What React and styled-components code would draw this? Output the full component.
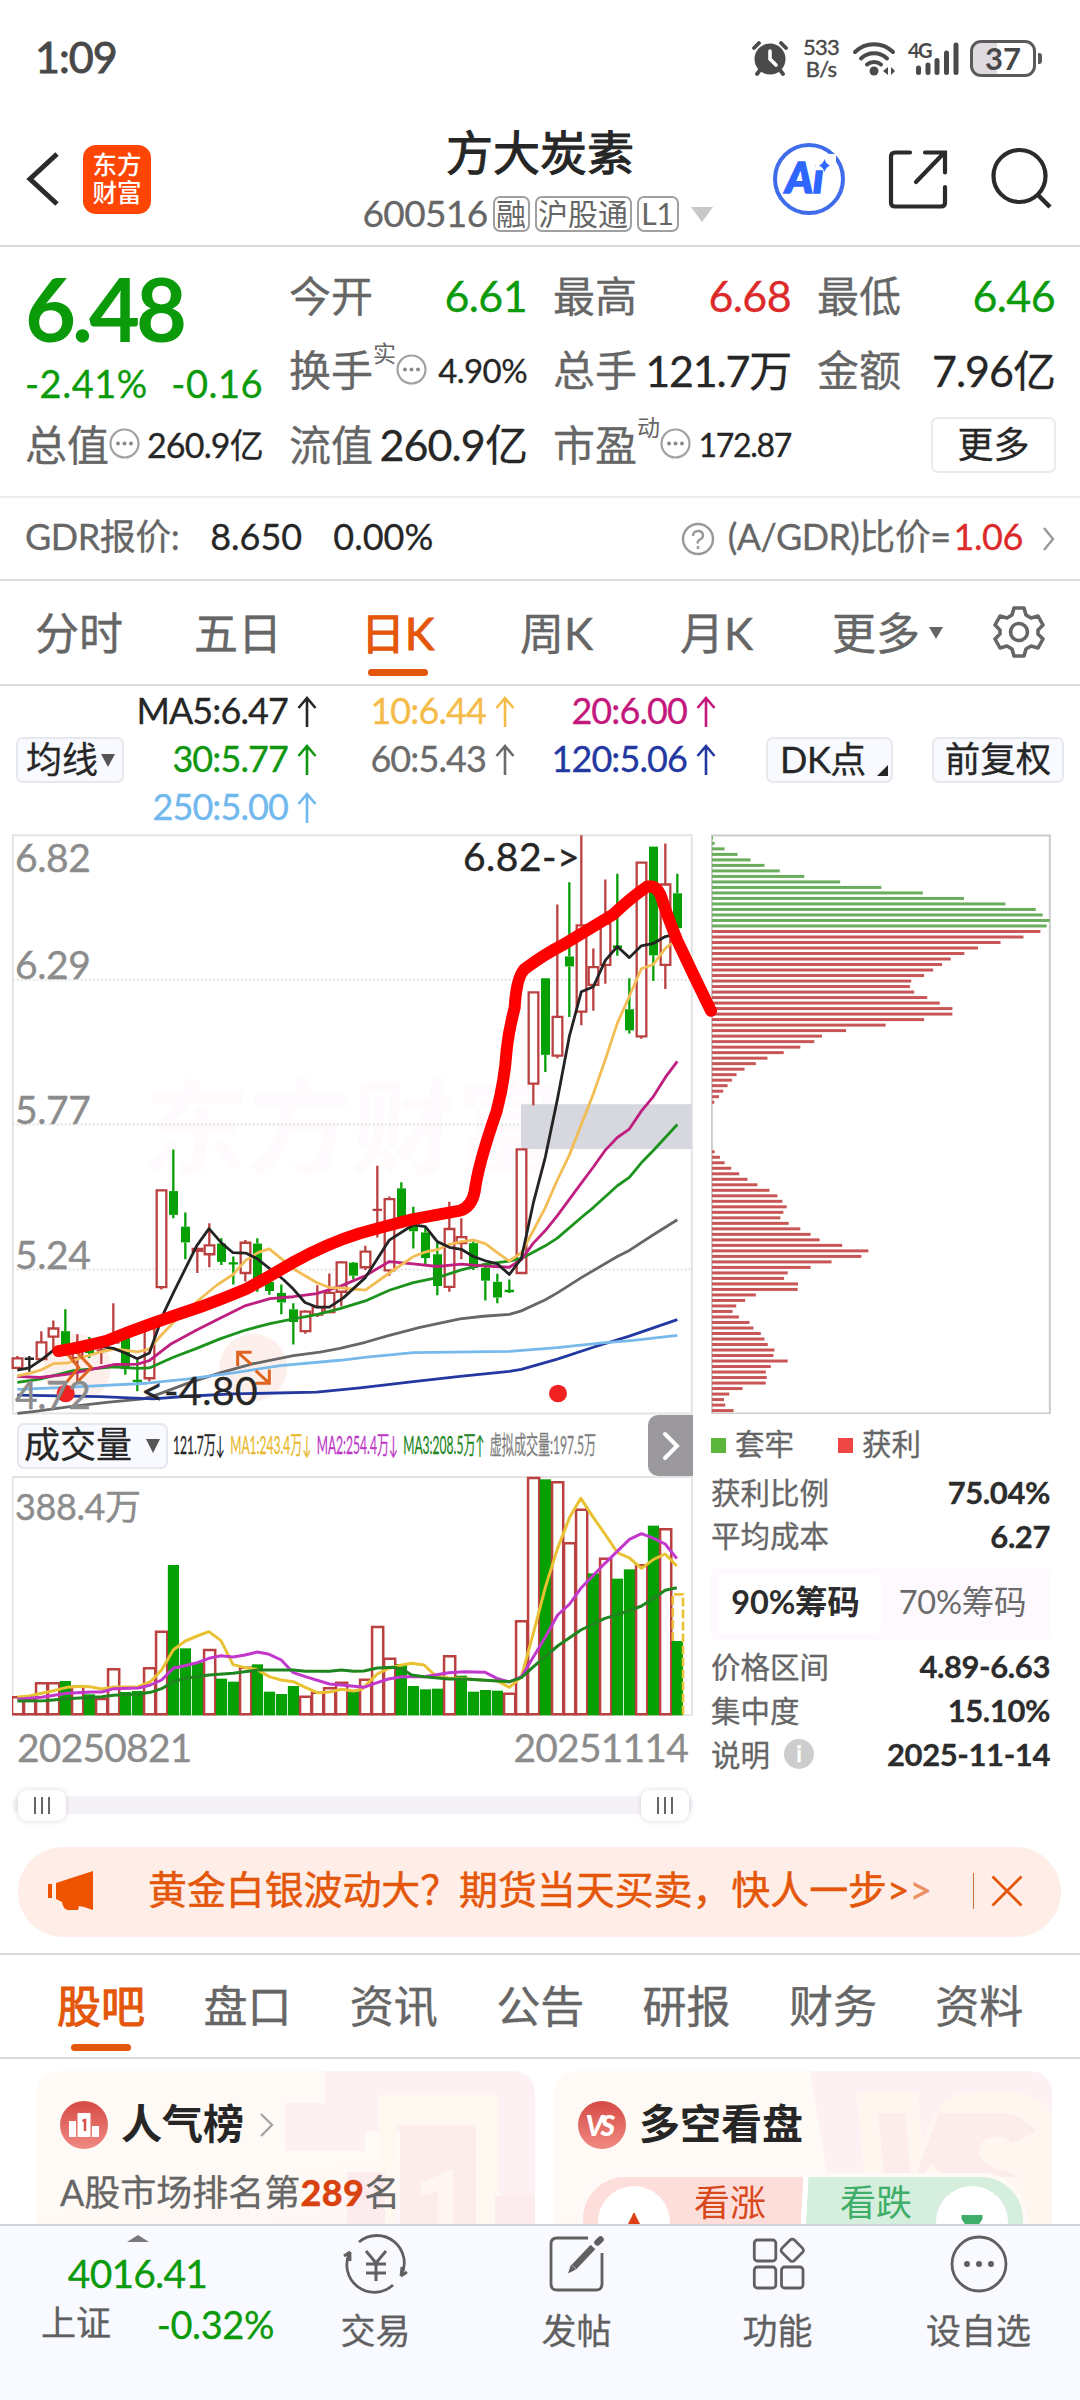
import React from 'react';
import styled, { createGlobalStyle } from 'styled-components';

const GREEN = '#0a9a0a';
const RED = '#dc2a2a';
const ORANGE = '#e4560a';
const GREY = '#666';

const GlobalStyle = createGlobalStyle`
  * { box-sizing: border-box; }
  body {
    margin: 0;
    background: #fff;
    color: #262626;
    font-family: "Lato", "Noto Sans CJK SC", sans-serif;
    line-height: 1;
  }
  svg { display: block; flex: none; }
`;

const Page = styled.div`
  width: 1080px;
  height: 2400px;
  overflow: hidden;
  background: #fff;
  display: flex;
  flex-direction: column;
`;

// every piece of copy goes through this one
const T = styled.span`
  flex: none;
  white-space: nowrap;
  font-size: ${p => p.$s || 36}px;
  color: ${p => p.$c || 'inherit'};
  font-weight: ${p => p.$b || 400};
  letter-spacing: ${p => p.$ls || 0}px;
  margin: 0 0 ${p => (p.$up === undefined ? 3 : p.$up)}px ${p => p.$ml || 0}px;
  -webkit-text-stroke: ${p => p.$stroke || 0.3}px currentColor;
`;

/* ---------- status bar ---------- */

const StatusBar = styled.div`
  height: 116px;
  flex: none;
  display: flex;
  align-items: center;
  padding: 0 38px 0 35px;
  color: #484848;
`;

const StatusIcons = styled.div`
  margin-left: auto;
  display: flex;
  align-items: center;
`;

const Speed = styled.div`
  width: 40px;
  margin: 0 11px 0 13px;
  font-size: 22px;
  line-height: 22px;
  text-align: center;
  letter-spacing: -0.8px;
  -webkit-text-stroke: 0.4px currentColor;
`;

const Battery = styled.div`
  width: 66px;
  height: 37px;
  margin-left: 11px;
  border: 3px solid #5a5a5a;
  border-radius: 11px;
  display: flex;
  align-items: center;
  justify-content: center;
  background: linear-gradient(90deg, #dedae0 40%, #fff 40%);
  font-size: 31px;
  font-weight: 700;
`;

const BatteryTip = styled.div`
  width: 4px;
  height: 11px;
  margin-left: 2px;
  border-radius: 0 3px 3px 0;
  background: #5a5a5a;
`;

const Status = () => (
  <StatusBar>
    <T $s={43} $stroke={0.9} $ls={-1}>1:09</T>
    <StatusIcons>
      <svg width="36" height="36" viewBox="0 0 36 36">
        <circle cx="18" cy="19" r="15.5" fill="#4a4a4a" />
        <path d="M2 8L7 3M34 8L29 3M8 30l-3 4M28 30l3 4" stroke="#4a4a4a" strokeWidth="3.8" strokeLinecap="round" />
        <path d="M18 11v8l6 6" stroke="#fff" strokeWidth="3.6" fill="none" strokeLinecap="round" />
      </svg>
      <Speed>533<br />B/s</Speed>
      <svg width="45" height="36" viewBox="0 0 45 36">
        <g fill="none" stroke="#4a4a4a" strokeWidth="4" strokeLinecap="round">
          <path d="M3 12a27 27 0 0 1 38 0" />
          <path d="M9 18.500a19 19 0 0 1 26 0" />
          <path d="M15 24.500a11 11 0 0 1 14 0" />
        </g>
        <circle cx="22" cy="31" r="4.500" fill="#4a4a4a" />
        <path d="M31 31l5-4v8zM43 31l-4-4v8z" fill="#4a4a4a" />
      </svg>
      <svg width="51" height="36" viewBox="0 0 51 36" overflow="visible" style={{ marginLeft: 11 }}>
        <text x="0" y="18" fontSize="20" fontWeight="700" fill="#4a4a4a" letterSpacing="-1.5">4G</text>
        <g stroke="#4a4a4a" strokeWidth="5" strokeLinecap="round">
          <path d="M10.500 28v4.500M20 25v7.500M29 20.500v12M38.500 13v19.500M48 5v27.500" />
        </g>
      </svg>
      <Battery>37</Battery>
      <BatteryTip />
    </StatusIcons>
  </StatusBar>
);

/* ---------- header ---------- */

const HeaderBar = styled.div`
  height: 131px;
  flex: none;
  display: grid;
  grid-template-columns: 340px 400px 340px;
  border-bottom: 2px solid #dadada;
`;

const HeaderLeft = styled.div`
  display: flex;
  align-items: center;
  padding: 0 0 3px 26px;
  gap: 23px;
`;

const Logo = styled.div`
  width: 68px;
  height: 69px;
  border-radius: 13px;
  background: #ff4503;
  color: #fff;
  font: 500 24.5px/28px "Noto Sans CJK SC", sans-serif;
  text-align: center;
  padding-top: 5px;
`;

const HeaderTitle = styled.div`
  display: flex;
  flex-direction: column;
  align-items: center;
  padding-top: 13px;
`;

const CodeRow = styled.div`
  display: flex;
  align-items: center;
  margin-top: 15px;
  padding-right: 5px;
  color: ${GREY};
`;

const Badge = styled.span`
  height: 36px;
  width: ${p => p.$w}px;
  margin-left: 5px;
  border: 2px solid #a0a0a0;
  border-radius: 7px;
  display: flex;
  align-items: center;
  justify-content: center;
  font-size: 30px;
  line-height: 30px;
  padding-bottom: 2px;
`;

const HeaderRight = styled.div`
  display: flex;
  align-items: center;
  padding: 0 0 3px 32px;
`;

const Caret = styled.i`
  flex: none;
  width: 0;
  height: 0;
  border: solid transparent;
  border-width: ${p => p.$h}px ${p => p.$w / 2}px 0;
  border-top-color: ${p => p.$c || '#555'};
  margin-left: ${p => p.$ml || 0}px;
`;

const Header = () => (
  <HeaderBar>
    <HeaderLeft>
      <svg width="34" height="56" viewBox="0 0 34 56">
        <path d="M31 3L4 28l27 25" fill="none" stroke="#2b2b2b" strokeWidth="5" />
      </svg>
      <Logo>东方<br />财富</Logo>
    </HeaderLeft>
    <HeaderTitle>
      <T $s={47} $stroke={1}>方大炭素</T>
      <CodeRow>
        <T $s={37} $ls={-0.6}>600516</T>
        <Badge $w={37}>融</Badge>
        <Badge $w={97}>沪股通</Badge>
        <Badge $w={42}>L1</Badge>
        <Caret $w={22} $h={15} $c="#c8c8c8" $ml={12} />
      </CodeRow>
    </HeaderTitle>
    <HeaderRight>
      <svg width="74" height="74" viewBox="0 0 74 74">
        <circle cx="37" cy="37" r="34" fill="none" stroke="#3f6cea" strokeWidth="4" />
        <text x="13.500" y="51" fontSize="42" fontWeight="900" fontStyle="italic" fill="#2f66ff" stroke="#2f66ff" strokeWidth="1.500">Ai</text>
        <rect x="44" y="12" width="20" height="16" fill="#fff" />
        <path d="M52.500 17q1.500 5 5.500 6.500-4 1.500-5.500 6.500-1.500-5-5.500-6.500 4-1.500 5.500-6.500z" fill="#2f66ff" />
      </svg>
      <svg width="62" height="62" viewBox="0 0 62 62" style={{ marginLeft: 40 }}>
        <g fill="none" stroke="#2b2b2b" strokeWidth="4.200" strokeLinecap="round">
          <path d="M24 4.500H9q-4 0-4 4v46q0 4 4 4h46q4 0 4-4V39" />
          <path d="M30 34L57 6M39 4.500h20v20" />
        </g>
      </svg>
      <svg width="64" height="64" viewBox="0 0 64 64" style={{ marginLeft: 43 }}>
        <circle cx="28.500" cy="29" r="26" fill="none" stroke="#2b2b2b" strokeWidth="4.200" />
        <path d="M47 48l12 12" stroke="#2b2b2b" strokeWidth="4.500" />
      </svg>
    </HeaderRight>
  </HeaderBar>
);

/* ---------- quote ---------- */

const QuoteGrid = styled.div`
  height: 251px;
  flex: none;
  display: grid;
  grid-template-columns: repeat(4, 238px);
  grid-template-rows: repeat(3, 74.500px);
  column-gap: 26px;
  padding: 13px 25px 0;
  border-bottom: 2px solid #ececec;
`;

const PriceBox = styled.div`
  grid-row: span 2;
  color: ${GREEN};
`;

const Price = styled.div`
  font-size: 88px;
  font-weight: 700;
  line-height: 97px;
  letter-spacing: -4px;
`;

const Change = styled.div`
  display: flex;
  justify-content: space-between;
  padding-top: 7px;
`;

const Cell = styled.div`
  display: flex;
  align-items: center;
`;

const Sup = styled.span`
  align-self: flex-start;
  margin-top: 7px;
  font-size: 23px;
  color: ${GREY};
`;

const Value = styled(T)`
  margin-left: auto;
`;

const MoreButton = styled.div`
  width: 125px;
  height: 56px;
  margin: 0 -1px 3px auto;
  padding-top: 2px;
  border: 2px solid #eee9ee;
  border-radius: 7px;
  display: flex;
  align-items: center;
  justify-content: center;
`;

const Dots = () => (
  <svg width="31" height="31" viewBox="0 0 31 31" style={{ marginBottom: 5 }}>
    <circle cx="15.500" cy="15.500" r="14" fill="none" stroke="#a2a2a2" strokeWidth="2.200" />
    <g fill="#8a8a8a"><circle cx="9" cy="15.500" r="2" /><circle cx="15.500" cy="15.500" r="2" /><circle cx="22" cy="15.500" r="2" /></g>
  </svg>
);

const quotes = [
  { label: '今开', value: '6.61', color: GREEN },
  { label: '最高', value: '6.68', color: RED },
  { label: '最低', value: '6.46', color: GREEN },
  { label: '换手', sup: '实', dots: true, value: '4.90%', size: 33, ls: -0.6 },
  { label: '总手', value: '121.7万', ls: -1.2 },
  { label: '金额', value: '7.96亿', ls: -1 },
  { label: '总值', dots: true, value: '260.9亿', size: 34, ls: -0.8 },
  { label: '流值', value: '260.9亿', ls: -0.9 },
  { label: '市盈', sup: '动', dots: true, value: '172.87', size: 32, ls: -1.3 },
];

const Quote = () => (
  <QuoteGrid>
    <PriceBox>
      <Price>6.48</Price>
      <Change>
        <T $s={38} $ls={0.5}>-2.41%</T>
        <T $s={38} $ls={0.5}>-0.16</T>
      </Change>
    </PriceBox>
    {quotes.map(q => (
      <Cell key={q.label}>
        <T $s={42} $c={GREY}>{q.label}</T>
        {q.sup && <Sup>{q.sup}</Sup>}
        {q.dots && <Dots />}
        <Value $s={q.size || 43} $c={q.color} $ls={q.ls || -0.6}>{q.value}</Value>
      </Cell>
    ))}
    <Cell><MoreButton><T>更多</T></MoreButton></Cell>
  </QuoteGrid>
);

const GdrRow = styled.div`
  height: 83px;
  flex: none;
  display: flex;
  align-items: center;
  padding: 0 24px 0 25px;
  border-bottom: 2px solid #dadada;
`;

const Gdr = () => (
  <GdrRow>
    <T $c={GREY} $ls={-0.5} $up={5}>GDR报价:</T>
    <T $ml={31} $up={5}>8.650</T>
    <T $ml={31} $up={5}>0.00%</T>
    <svg width="34" height="34" viewBox="0 0 34 34" style={{ marginLeft: 'auto' }}>
      <circle cx="17" cy="17" r="15" fill="none" stroke="#999" strokeWidth="2.400" />
      <path d="M12 14q0-5 5-5t5 4.500q0 2.500-3 4t-2 4M17 24v3" fill="none" stroke="#999" strokeWidth="2.400" />
    </svg>
    <T $c={GREY} $ml={13} $ls={-0.6} $up={5}>(A/GDR)比价=</T>
    <T $c={RED} $ml={3} $ls={-0.4} $up={5}>1.06</T>
    <svg width="14" height="26" viewBox="0 0 14 26" style={{ marginLeft: 19 }}>
      <path d="M2 2l9 11-9 11" fill="none" stroke="#999" strokeWidth="2.400" />
    </svg>
  </GdrRow>
);

/* ---------- period tabs ---------- */

const PeriodBar = styled.div`
  height: 105px;
  flex: none;
  display: flex;
  align-items: stretch;
  padding-left: 35px;
  border-bottom: 2px solid #dadada;
`;

const Tab = styled.div`
  width: ${p => p.$w}px;
  flex: none;
  display: flex;
  align-items: center;
  font-size: 44px;
  color: ${p => (p.$on ? ORANGE : GREY)};
  -webkit-text-stroke: ${p => (p.$on ? 1.1 : 0.4)}px currentColor;
`;

const TabText = styled.div`
  height: 100%;
  display: flex;
  align-items: center;
  justify-content: center;
  position: relative;
  &::after {
    content: '';
    display: ${p => (p.$on ? 'block' : 'none')};
    position: absolute;
    bottom: ${p => p.$bottom || 8}px;
    left: calc(50% - 30px);
    width: 60px;
    height: 7px;
    border-radius: 4px;
    background: ${ORANGE};
  }
`;

const Gear = () => (
  <svg width="52" height="54" viewBox="0 0 52 54" style={{ marginTop: 24 }}>
    <path
      d="M21 3h10l2 7 5 3 7-2 5 9-5 5v4l5 5-5 9-7-2-5 3-2 7H21l-2-7-5-3-7 2-5-9 5-5v-4l-5-5 5-9 7 2 5-3z"
      fill="none" stroke="#666" strokeWidth="3.600" strokeLinejoin="round"
    />
    <circle cx="26" cy="27" r="8.500" fill="none" stroke="#666" strokeWidth="3.600" />
  </svg>
);

const Periods = () => (
  <PeriodBar>
    <Tab $w={159}><TabText>分时</TabText></Tab>
    <Tab $w={167}><TabText>五日</TabText></Tab>
    <Tab $w={159} $on><TabText $on>日K</TabText></Tab>
    <Tab $w={160}><TabText>周K</TabText></Tab>
    <Tab $w={152}><TabText>月K</TabText></Tab>
    <Tab $w={161}><TabText>更多</TabText><Caret $w={15} $h={12} $c="#666" $ml={9} /></Tab>
    <Gear />
  </PeriodBar>
);

/* ---------- moving averages ---------- */

const MaBar = styled.div`
  height: 148px;
  flex: none;
  display: flex;
  align-items: center;
  padding-left: 16px;
`;

const Chip = styled.div`
  width: ${p => p.$w}px;
  height: 46px;
  flex: none;
  border: 2px solid #e6e8ee;
  border-radius: 7px;
  background: #f8faff;
  display: flex;
  align-items: center;
  justify-content: ${p => (p.$left ? 'flex-start' : 'center')};
  padding-left: ${p => p.$left || 0}px;
  margin-left: ${p => p.$ml || 0}px;
`;

const Corner = styled.i`
  align-self: flex-end;
  margin: 0 0 5px 11px;
  border: solid transparent;
  border-width: 0 0 11px 11px;
  border-bottom-color: #262626;
`;

const MaGrid = styled.div`
  width: 592px;
  flex: none;
  display: grid;
  grid-template-columns: 193px 198px 201px;
  grid-auto-rows: 48px;
  justify-items: end;
  align-items: center;
  padding-bottom: 1px;
`;

const MaItem = styled.div`
  display: flex;
  align-items: center;
  color: ${p => p.$c};
`;

const UpArrow = () => (
  <svg width="20" height="31" viewBox="0 0 20 31" style={{ marginLeft: 9 }}>
    <path d="M10 31V2M1.500 12L10 2l8.500 10" fill="none" stroke="currentColor" strokeWidth="2.600" />
  </svg>
);

const averages = [
  ['MA5:6.47', '#262626'],
  ['10:6.44', '#f5bb49'],
  ['20:6.00', '#c4177c'],
  ['30:5.77', '#119611'],
  ['60:5.43', '#6b6b6b'],
  ['120:5.06', '#2338a0'],
  ['250:5.00', '#70b8ee'],
];

const Averages = () => (
  <MaBar>
    <Chip $w={108} $left={8}><T>均线</T><Caret $w={15} $h={13} $ml={3} /></Chip>
    <MaGrid>
      {averages.map(([text, color]) => (
        <MaItem key={text} $c={color}><T $ls={-0.9} $up={4}>{text}</T><UpArrow /></MaItem>
      ))}
    </MaGrid>
    <Chip $w={127} $ml={50} $left={12}><T $ls={-0.5}>DK点</T><Corner /></Chip>
    <Chip $w={132} $ml={39}><T $s={35.5}>前复权</T></Chip>
  </MaBar>
);

/* ---------- charts ---------- */

const ChartArea = styled.div`
  height: 1004px;
  flex: none;
  display: grid;
  grid-template-columns: 681px 340px;
  column-gap: 18px;
  padding-left: 12px;
`;

const KBox = styled.div`
  position: relative;
  height: 581px;
  z-index: 2;
`;

const AxisLabel = styled.div`
  position: absolute;
  left: ${p => p.$x || 3}px;
  top: ${p => p.$y}px;
  font-size: ${p => p.$s || 39}px;
  letter-spacing: ${p => p.$ls || -0.4}px;
  color: ${p => p.$c || '#8c8c8c'};
  -webkit-text-stroke: 0.4px currentColor;
`;

const Watermark = styled.div`
  position: absolute;
  left: 132px;
  top: 232px;
  z-index: -1;
  font: 700 104px/110px "Noto Sans CJK SC", sans-serif;
  color: #fefafe;
  transform: skewX(-3deg);
`;

const CANDLE_RED = '#bb4040';
const CANDLE_GREEN = '#04a004';

// [kind, high, body top, body bottom, low] in chart units, y grows downwards
const candles = [
  ['r', 1400, 1406, 1431, 1431], ['k', 1400, 1407, 1407, 1441], ['r', 1335, 1364, 1408, 1413],
  ['r', 1307, 1328, 1349, 1385], ['g', 1278, 1335, 1375, 1400], ['r', 1343, 1390, 1405, 1468],
  ['g', 1350, 1380, 1392, 1405], ['r', 1375, 1385, 1385, 1421], ['r', 1262, 1350, 1365, 1370],
  ['g', 1345, 1350, 1434, 1449], ['g', 1410, 1465, 1465, 1492], ['r', 1320, 1328, 1458, 1466],
  ['r', 965, 967, 1220, 1226], ['g', 860, 969, 1031, 1040], ['g', 1025, 1062, 1103, 1147],
  ['r', 1117, 1120, 1125, 1183], ['r', 1053, 1111, 1134, 1168], ['g', 1092, 1106, 1154, 1162],
  ['g', 1140, 1158, 1158, 1213], ['r', 1097, 1104, 1183, 1205], ['g', 1092, 1106, 1205, 1232],
  ['g', 1195, 1206, 1230, 1240], ['g', 1213, 1235, 1260, 1291], ['g', 1262, 1278, 1311, 1370],
  ['r', 1280, 1284, 1335, 1342], ['r', 1215, 1272, 1292, 1298], ['r', 1184, 1235, 1285, 1288],
  ['r', 1152, 1155, 1232, 1270], ['g', 1154, 1156, 1190, 1200], ['r', 1112, 1127, 1168, 1175],
  ['r', 903, 1018, 1018, 1090], ['r', 983, 990, 1176, 1190], ['g', 946, 962, 1050, 1060],
  ['g', 1010, 1060, 1074, 1119], ['g', 1065, 1077, 1144, 1162], ['g', 1100, 1134, 1217, 1241],
  ['r', 997, 1068, 1219, 1232], ['r', 1040, 1089, 1105, 1147], ['g', 1100, 1105, 1170, 1175],
  ['g', 1160, 1170, 1203, 1255], ['g', 1185, 1206, 1247, 1262], ['g', 1200, 1230, 1230, 1235],
  ['r', 860, 860, 1183, 1183], ['r', 450, 450, 688, 745], ['g', 413, 413, 613, 658],
  ['r', 220, 514, 615, 622], ['g', 162, 356, 382, 514], ['r', 39, 275, 500, 536],
  ['r', 335, 384, 430, 498], ['r', 155, 270, 378, 427], ['g', 140, 327, 334, 354],
  ['g', 413, 494, 549, 557], ['r', 110, 111, 565, 571], ['g', 69, 69, 353, 420],
  ['r', 61, 168, 378, 441], ['g', 140, 191, 282, 284],
];

const maLines = [
  ['#676767', '52,1550 100,1545 210,1532 320,1521 430,1512 480,1498 560,1472 660,1444 760,1420 880,1399 960,1390 1020,1380 1096,1364 1168,1346 1260,1325 1380,1303 1450,1296 1528,1291 1564,1282 1636,1253 1672,1235 1744,1195 1852,1140 1888,1124 1960,1083 2032,1044'],
  ['#2338a0', '52,1502 300,1506 460,1512 560,1505 700,1499 950,1494 1080,1483 1240,1467 1380,1453 1528,1440 1564,1435 1672,1408 1780,1377 1888,1348 2032,1305'],
  ['#76b9ea', '52,1487 200,1482 440,1471 560,1460 700,1444 840,1425 1020,1411 1100,1403 1240,1391 1528,1388 1672,1378 1800,1366 1900,1359 2032,1346'],
  ['#1c931c', '52,1469 120,1460 220,1438 340,1428 412,1432 448,1431 520,1403 590,1380 660,1355 737,1332 810,1315 880,1303 950,1292 1020,1276 1096,1256 1168,1228 1240,1208 1312,1195 1384,1175 1456,1160 1528,1152 1564,1145 1636,1112 1672,1092 1744,1038 1780,1012 1852,955 1888,933 1924,895 1960,863 2032,795'],
  ['#bf1f7e', '52,1453 120,1456 205,1447 300,1430 345,1422 412,1421 448,1412 510,1370 590,1332 660,1301 737,1268 810,1250 880,1245 950,1237 1020,1218 1096,1190 1168,1153 1240,1159 1312,1166 1384,1160 1456,1165 1528,1168 1564,1148 1600,1105 1636,1072 1672,1033 1744,948 1780,906 1816,862 1852,829 1888,807 1924,760 1960,722 1996,672 2032,630'],
  ['#f2bd55', '52,1452 88,1445 124,1436 160,1420 205,1418 240,1405 300,1390 345,1381 412,1389 448,1382 484,1345 540,1295 590,1258 650,1215 699,1187 737,1150 775,1129 808,1120 850,1150 880,1172 915,1190 950,1208 988,1221 1020,1222 1096,1228 1168,1183 1240,1140 1276,1128 1312,1122 1348,1108 1384,1101 1420,1097 1456,1106 1492,1130 1528,1152 1564,1130 1600,1072 1636,1012 1672,940 1708,875 1744,795 1780,715 1816,625 1852,530 1888,460 1924,388 1960,377 1996,335 2014,322'],
  ['#242424', '52,1437 88,1431 124,1410 160,1385 196,1375 310,1376 340,1380 376,1392 412,1407 448,1392 490,1290 520,1235 590,1112 627,1067 665,1105 699,1130 737,1131 770,1145 810,1172 850,1200 880,1225 915,1260 950,1272 988,1272 1030,1248 1096,1195 1168,1097 1240,1057 1276,1062 1312,1101 1348,1116 1384,1121 1420,1140 1456,1151 1492,1159 1528,1187 1564,1145 1600,1000 1636,880 1672,730 1708,565 1744,448 1780,435 1816,366 1852,330 1888,359 1924,328 1960,322 1996,304 2014,300'],
];

const Candle = ({ i, d }) => {
  const [kind, high, top, bottom, low] = d;
  const x = 52 + i * 36;
  const color = { r: CANDLE_RED, g: CANDLE_GREEN, k: '#222' }[kind];
  const line = { stroke: color, strokeWidth: 2.3, vectorEffect: 'non-scaling-stroke' };
  if (bottom - top < 3) {
    return <path d={`M${x} ${high}V${low}M${x - 14} ${top}h28`} {...line} />;
  }
  return (
    <g>
      <path d={`M${x} ${high}V${top}M${x} ${bottom}V${low}`} {...line} />
      {kind === 'g'
        ? <rect x={x - 13} y={top} width="27" height={bottom - top} fill={color} />
        : <rect x={x - 14} y={top} width="29" height={bottom - top} fill="#fff" {...line} />}
    </g>
  );
};

const KChart = () => (
  <KBox>
    <Watermark>东方财富</Watermark>
    <svg width="681" height="581" viewBox="36 36 2043 1518" preserveAspectRatio="none" overflow="visible">
      <g fill="none" stroke="#e2e2e2" strokeWidth="2" strokeDasharray="2 2">
        {[417, 795, 1174].map(y => <path key={y} d={`M38 ${y}H2074`} vectorEffect="non-scaling-stroke" />)}
      </g>
      <rect x="38.500" y="39" width="2037" height="1511" fill="none" stroke="#e4e4e4" strokeWidth="2" vectorEffect="non-scaling-stroke" />
      <ellipse cx="232" cy="1430" rx="102" ry="88" fill="#fdf0ec" />
      <ellipse cx="760" cy="1430" rx="102" ry="88" fill="#fdf0ec" />
      <rect x="1563" y="742" width="512" height="117" fill="#d6d7df" />
      {candles.map((d, i) => <Candle key={i} i={i} d={d} />)}
      {maLines.map(([color, points]) => (
        <polyline key={color} points={points} fill="none" stroke={color} strokeWidth="2.800" strokeLinejoin="round" vectorEffect="non-scaling-stroke" />
      ))}
      <g fill="none" stroke="#e0641e" strokeWidth="3">
        <path d="M200 1392l36 38-36 38M232 1392l42 38-42 38" vectorEffect="non-scaling-stroke" />
        <path d="M713 1426v-36h42M716 1392l38 30M808 1435v36h-42M805 1469l-38-31" vectorEffect="non-scaling-stroke" />
      </g>
      <ellipse cx="197" cy="1498" rx="27" ry="23" fill="#f32222" />
      <ellipse cx="1674" cy="1498" rx="27" ry="23" fill="#f32222" />
      <path
        d="M175 1387Q240 1378 320 1360Q440 1318 600 1272Q680 1246 740 1224Q800 1196 880 1155Q980 1106 1080 1079Q1160 1060 1240 1042L1380 1020Q1415 1010 1424 970Q1434 900 1490 760Q1514 680 1520 600Q1526 550 1544 490Q1550 400 1580 385Q1630 352 1690 325L1840 246Q1890 204 1940 174Q1968 168 1982 196Q2000 246 2032 315Q2080 404 2133 498"
        fill="none" stroke="#f00" strokeWidth="12" strokeLinecap="round" strokeLinejoin="round" vectorEffect="non-scaling-stroke"
      />
    </svg>
    <AxisLabel $y={4}>6.82</AxisLabel>
    <AxisLabel $y={111}>6.29</AxisLabel>
    <AxisLabel $y={256}>5.77</AxisLabel>
    <AxisLabel $y={401}>5.24</AxisLabel>
    <AxisLabel $y={541}>4.72</AxisLabel>
    <AxisLabel $x={451} $y={3} $ls={0.5} $c="#262626">6.82-&gt;</AxisLabel>
    <AxisLabel $x={129} $y={537} $ls={0.5} $c="#262626">&lt;-4.80</AxisLabel>
  </KBox>
);

const VolHead = styled.div`
  height: 61px;
  display: flex;
  align-items: center;
  padding-left: 5px;
`;

const VolStats = styled.div`
  width: 474px;
  height: 30px;
  margin-left: 5px;
  display: flex;
  align-items: center;
  gap: 11px;
  white-space: nowrap;
  transform: scaleX(0.482);
  transform-origin: left center;
`;

const ExpandButton = styled.div`
  width: 45px;
  height: 61px;
  flex: none;
  margin-left: auto;
  border-radius: 10px 0 0 10px;
  background: #9b999d;
  display: flex;
  align-items: center;
  justify-content: center;
`;

const VolBox = styled.div`
  position: relative;
  height: 241px;
`;

const volumes = [
  'r862', 'r868', 'r820', 'r820', 'g813', 'r830', 'g853', 'r867', 'r778', 'g846', 'g843', 'r775', 'r665', 'g465',
  'g715', 'g758', 'r720', 'g806', 'g815', 'r773', 'g763', 'g845', 'g852', 'g828', 'r860', 'r848', 'r835', 'r818',
  'g845', 'r809', 'r651', 'r746', 'g762', 'g828', 'g838', 'g836', 'r739', 'g797', 'g845', 'g840', 'g842', 'r851',
  'r634', 'r204', 'g208', 'r217', 'r400', 'r299', 'g490', 'r446', 'g506', 'g478', 'r466', 'g347', 'r358', 'g693',
];

const volLines = [
  ['#e9c233', '39,861 66,858 93,850 120,842 150,832 185,829 205,831 228,837 255,831 290,831 310,830 337,815 362,780 388,720 415,693 442,678 468,665 495,692 522,764 549,773 575,778 603,800 630,810 657,815 684,832 711,848 738,846 765,838 792,843 810,838 845,792 870,775 900,765 922,760 950,765 975,797 1005,804 1030,805 1087,811 1113,812 1141,832 1168,800 1195,668 1222,530 1249,415 1276,322 1301,265 1329,322 1355,372 1383,428 1410,444 1437,475 1464,448 1490,432 1516,468'],
  ['#c238cc', '39,868 93,862 150,850 205,846 228,846 255,836 310,834 337,825 362,810 388,775 442,758 468,745 495,737 522,741 549,735 577,726 603,733 630,750 657,788 684,800 738,822 765,825 815,832 845,818 870,807 900,800 950,800 1005,788 1040,785 1087,787 1113,805 1141,816 1168,800 1195,740 1222,680 1249,615 1276,582 1301,535 1355,460 1410,388 1437,371 1464,385 1490,402 1516,446'],
  ['#1f861f', '39,873 100,872 150,866 228,860 255,856 310,852 337,847 362,836 388,815 415,805 468,795 522,790 577,780 657,780 684,784 738,784 765,780 792,784 815,783 845,774 880,772 900,776 922,795 950,800 1005,807 1040,807 1087,811 1141,815 1168,803 1195,770 1249,708 1301,660 1355,625 1383,614 1410,602 1437,588 1464,565 1490,541 1516,533'],
];

const Volume = () => (
  <>
    <VolHead>
      <Chip $w={151} $left={5}><T>成交量</T><Caret $w={15} $h={14} $ml={14} /></Chip>
      <VolStats>
        <T $s={25} $c="#262626">121.7万↓</T>
        <T $s={25} $c="#e8b92c">MA1:243.4万↓</T>
        <T $s={25} $c="#bd3ac8">MA2:254.4万↓</T>
        <T $s={25} $c="#1f861f">MA3:208.5万↑</T>
        <T $s={25} $c="#808080">虚拟成交量:197.5万</T>
      </VolStats>
      <ExpandButton>
        <svg width="20" height="32" viewBox="0 0 20 32">
          <path d="M4 4l12 12L4 28" fill="none" stroke="#fff" strokeWidth="4" strokeLinecap="round" />
        </svg>
      </ExpandButton>
    </VolHead>
    <VolBox>
      <svg width="681" height="240" viewBox="26.880 198 1525.400 720" preserveAspectRatio="none">
        <rect x="28" y="201" width="1522" height="715" fill="none" stroke="#e4e4e4" strokeWidth="2" vectorEffect="non-scaling-stroke" />
        {volumes.map((v, i) => {
          const x = 39 + i * 26.88;
          const top = Number(v.slice(1));
          return v[0] === 'g'
            ? <rect key={i} x={x - 12.5} y={top} width="25" height={916 - top} fill={CANDLE_GREEN} />
            : <rect key={i} x={x - 12} y={top} width="25" height={913 - top} fill="#fff" stroke={CANDLE_RED} strokeWidth="2.500" vectorEffect="non-scaling-stroke" />;
        })}
        <path d="M1507 693V553H1530V914" fill="none" stroke="#ecc23c" strokeWidth="2.600" strokeDasharray="9 3" vectorEffect="non-scaling-stroke" />
        {volLines.map(([color, points]) => (
          <polyline key={color} points={points} fill="none" stroke={color} strokeWidth="3" strokeLinejoin="round" vectorEffect="non-scaling-stroke" />
        ))}
      </svg>
      <AxisLabel $x={3} $y={12} $s={36} $ls={-0.4}>388.4万</AxisLabel>
    </VolBox>
  </>
);

const Dates = styled.div`
  height: 64px;
  display: flex;
  align-items: center;
  justify-content: space-between;
  padding: 0 5px 0 5px;
  color: #8c8c8c;
`;

const Slider = styled.div`
  height: 18px;
  margin-top: 15px;
  border-radius: 9px;
  background: #f5f2f7;
  display: flex;
  align-items: center;
  justify-content: space-between;
  padding: 0 4px 0 6px;
`;

const Thumb = styled.div`
  width: 48px;
  height: 31px;
  border-radius: 9px;
  background: #fff;
  box-shadow: 0 0 5px rgba(120, 90, 120, 0.25);
  display: flex;
  align-items: center;
  justify-content: center;
  gap: 5px;
  i {
    width: 2px;
    height: 17px;
    background: #666;
  }
`;

/* ---------- chip distribution ---------- */

const CHIP_GREEN_ROWS = 17;
const chipRows = [
  66, 71, 101, 140, 179, 221, 267, 341, 449, 573, 698, 822, 947, 1038, 1059, 1080, 1071,
  1052, 1001, 932, 864, 823, 782, 756, 729, 702, 663, 659, 672, 711, 749, 787, 787, 702, 586, 467, 394, 371, 329,
  279, 230, 195, 161, 137, 123, 110, 97, 84, 70, 0, 0, 0, 0, 0, 0, 0, 0,
  71, 87, 101, 121, 145, 170, 200, 236, 260, 275, 288, 278, 269, 294, 329, 360, 387, 455, 534, 513, 423, 360, 291,
  280, 322, 321, 195, 163, 136, 125, 144, 176, 188, 210, 221, 231, 251, 248, 291, 240, 225, 228, 225, 155, 115, 99,
  103, 128,
];

const SidePanel = styled.div`
  color: ${GREY};
`;

const Legend = styled.div`
  height: 58px;
  display: flex;
  align-items: center;
  padding-top: 5px;
`;

const Swatch = styled.i`
  width: 15px;
  height: 15px;
  margin: 0 9px 0 ${p => p.$ml || 0}px;
  background: ${p => p.$c};
`;

const InfoRow = styled.div`
  height: 43.700px;
  display: flex;
  align-items: center;
  justify-content: space-between;
  padding: 0 1px 3px 0;
  font-size: 29.500px;
  -webkit-text-stroke: 0.3px currentColor;
  b {
    color: #2c2c2c;
    font-size: 31px;
    letter-spacing: -0.4px;
  }
`;

const InfoLabel = styled.span`
  display: flex;
  align-items: center;
  gap: 14px;
`;

const InfoDot = styled.span`
  width: 30px;
  height: 30px;
  border-radius: 50%;
  background: #cdcdcd;
  color: #fff;
  font-size: 22px;
  font-weight: 700;
  display: flex;
  align-items: center;
  justify-content: center;
`;

const Toggle = styled.div`
  height: 72px;
  margin: 8.600px 0 6.600px;
  padding: 6px 7px;
  border-radius: 8px;
  background: #fdf9fe;
  display: grid;
  grid-template-columns: 163px 163px;
`;

const ToggleItem = styled.div`
  display: flex;
  align-items: center;
  justify-content: center;
  border-radius: 6px;
  padding: 0 ${p => (p.$on ? 8 : 0)}px 3px 0;
  font-size: 32.500px;
  letter-spacing: -0.2px;
  background: ${p => (p.$on ? '#fff' : 'none')};
  color: ${p => (p.$on ? '#2c2c2c' : '#6b6b6b')};
  font-weight: ${p => (p.$on ? 700 : 400)};
`;

const ChipPanel = () => (
  <SidePanel>
    <svg width="340" height="580" viewBox="60 36 1024 1516" preserveAspectRatio="none">
      <rect x="62.500" y="40" width="1018" height="1511" fill="none" stroke="#cbcbcb" strokeWidth="2" vectorEffect="non-scaling-stroke" />
      {chipRows.map((end, i) => end > 0 && (
        <rect key={i} x="63" y={42.2 + i * 14.394} width={end - 63} height="7.800" fill={i < CHIP_GREEN_ROWS ? '#6aad5c' : '#c95656'} />
      ))}
    </svg>
    <Legend>
      <Swatch $c="#5cb63c" /><T $s={29.5}>套牢</T>
      <Swatch $c="#ee4545" $ml={44} /><T $s={29.5}>获利</T>
    </Legend>
    <InfoRow>获利比例<b>75.04%</b></InfoRow>
    <InfoRow>平均成本<b>6.27</b></InfoRow>
    <Toggle>
      <ToggleItem $on>90%筹码</ToggleItem>
      <ToggleItem>70%筹码</ToggleItem>
    </Toggle>
    <InfoRow>价格区间<b>4.89-6.63</b></InfoRow>
    <InfoRow>集中度<b>15.10%</b></InfoRow>
    <InfoRow><InfoLabel>说明<InfoDot>i</InfoDot></InfoLabel><b>2025-11-14</b></InfoRow>
  </SidePanel>
);

const Charts = () => (
  <ChartArea>
    <div>
      <KChart />
      <Volume />
      <Dates><T $s={39} $ls={-0.8}>20250821</T><T $s={39} $ls={-0.8}>20251114</T></Dates>
      <Slider>
        <Thumb><i /><i /><i /></Thumb>
        <Thumb><i /><i /><i /></Thumb>
      </Slider>
    </div>
    <ChipPanel />
  </ChartArea>
);

/* ---------- banner ---------- */

const BannerWrap = styled.div`
  height: 117px;
  flex: none;
  padding: 9px 19px 0 18px;
  border-bottom: 2px solid #dadada;
`;

const BannerBody = styled.div`
  height: 90px;
  border-radius: 45px;
  background: #ffeee7;
  display: flex;
  align-items: center;
  padding: 0 38px 2px 30px;
  color: ${ORANGE};
`;

const Divider = styled.i`
  width: 1px;
  height: 36px;
  margin: 0 17px 0 auto;
  background: #cf6a35;
`;

const Fade = styled.span`
  color: #ea8f62;
`;

const Banner = () => (
  <BannerWrap>
    <BannerBody>
      <svg width="46" height="42" viewBox="0 0 46 42">
        <path d="M2 14v14" stroke="#ee5300" strokeWidth="4" />
        <path d="M8 13L45 1v39l-9-3-5-1-1 4H20q-5-1-6-8l-6-3z" fill="#ee5300" />
      </svg>
      <T $s={38.9} $ml={54} $stroke={0.5}>黄金白银波动大？期货当天买卖，快人一步&gt;<Fade>&gt;</Fade></T>
      <Divider />
      <svg width="32" height="32" viewBox="0 0 32 32">
        <path d="M1.500 1.500l29 29M30.500 1.500l-29 29" stroke="#e4560a" strokeWidth="2.800" />
      </svg>
    </BannerBody>
  </BannerWrap>
);

/* ---------- section tabs and cards ---------- */

const SectionBar = styled.div`
  height: 104px;
  flex: none;
  display: flex;
  padding-left: 57px;
  border-bottom: 2px solid #dadada;
`;

const sections = ['股吧', '盘口', '资讯', '公告', '研报', '财务', '资料'];

const Cards = styled.div`
  height: 165px;
  flex: none;
  overflow: hidden;
  display: grid;
  grid-template-columns: 499px 498px;
  column-gap: 19px;
  padding: 12px 0 0 36px;
`;

const Card = styled.div`
  position: relative;
  height: 230px;
  overflow: hidden;
  border-radius: 22px;
  background: linear-gradient(170deg, #fffaf5 45%, #fdf4f6 75%);
  padding: 30px 24px 0;
`;

const CardArt = styled.svg`
  position: absolute;
  top: 0;
  right: 0;
`;

const CardHead = styled.div`
  position: relative;
  display: flex;
  align-items: center;
  height: 48px;
`;

const Rank = styled.div`
  position: relative;
  margin-top: 25px;
  font-size: 36px;
  color: ${GREY};
  -webkit-text-stroke: 0.3px currentColor;
  b {
    color: #d9420f;
    font-weight: 900;
    letter-spacing: 0.4px;
  }
`;

const VoteBar = styled.div`
  position: relative;
  width: 448px;
  height: 92px;
  margin: 24px 0 0 1px;
  border: 4px solid #fffaf7;
  border-radius: 46px;
  background: linear-gradient(93deg, #fddedb 49.500%, #fff 49.600%, #fff 50.700%, #d5eedd 50.800%);
  display: flex;
  align-items: flex-start;
  padding: 9px 15px;
`;

const VoteCircle = styled.div`
  width: 72px;
  height: 72px;
  flex: none;
  border-radius: 50%;
  background: #fff;
  display: flex;
  justify-content: center;
  padding-top: ${p => p.$pt}px;
`;

const VoteText = styled.div`
  flex: 1;
  padding: 0 ${p => p.$pr || 0}px 0 ${p => p.$pl || 0}px;
  text-align: center;
  font-size: 36px;
  line-height: 32px;
  color: ${p => p.$c};
`;

const CardRow = () => (
  <Cards>
    <Card>
      <CardArt width="250" height="160" viewBox="0 0 250 160">
        <path d="M40 0h210v160H130V60H80V80H0V32h40z" fill="#fdf1f4" />
        <path d="M94 24h120v134h-30V54h-74v104H94z" fill="#fff8f1" />
        <rect x="115" y="54" width="76" height="106" fill="#fdecec" />
        <path d="M136 112l32-14v58h-15v-36l-17 5z" fill="#fff5f2" />
        <path d="M62 101h38v55H62zM210 125h40v35h-40z" fill="#fdecee" />
      </CardArt>
      <CardHead>
        <svg width="48" height="48" viewBox="0 0 48 48">
          <defs>
            <linearGradient id="badge" x1="0" y1="0" x2="0" y2="1">
              <stop offset="0" stopColor="#d64a45" /><stop offset="1" stopColor="#f08a83" />
            </linearGradient>
          </defs>
          <circle cx="24" cy="24" r="24" fill="url(#badge)" />
          <path d="M9 20h7v16H9zM17.500 12h13v24h-13zM32 25h7v11h-7z" fill="#fff" />
          <path d="M22.500 20l2.500-1v11" stroke="#d8504b" strokeWidth="2.500" fill="none" />
        </svg>
        <T $s={41} $b={700} $ml={13} $stroke={0.01}>人气榜</T>
        <svg width="16" height="24" viewBox="0 0 16 24" style={{ marginLeft: 15 }}>
          <path d="M2 1l11 11L2 23" fill="none" stroke="#a5a5a5" strokeWidth="2.400" />
        </svg>
      </CardHead>
      <Rank>A股市场排名第<b>289</b>名</Rank>
    </Card>
    <Card>
      <CardArt width="250" height="160" viewBox="0 0 250 160">
        <path d="M8 0h242v160H35z" fill="#fdf1f4" />
        <path d="M54 21h62l4 50 14-30q12-20 34-20h46q22 2 36 22v117H68z" fill="#fff6f0" />
        <path d="M76 42h27l6 64H82z" fill="#fdecec" />
        <path d="M137 42h66q22 4 31 19l-24 11q-8-8-20-6-14 4-13 17 6 14 26 16l14 7h-74l-14-14-8 14h-8z" fill="#fdecec" />
      </CardArt>
      <CardHead>
        <svg width="48" height="48" viewBox="0 0 48 48">
          <circle cx="24" cy="24" r="24" fill="url(#badge)" />
          <text x="7.500" y="34.500" fontSize="28" fontWeight="900" fontStyle="italic" fill="#fff" letterSpacing="-3">VS</text>
        </svg>
        <T $s={41} $b={700} $ml={13} $stroke={0.01}>多空看盘</T>
      </CardHead>
      <VoteBar>
        <VoteCircle $pt={26}>
          <svg width="20" height="20" viewBox="0 0 20 20"><path d="M10 1l9 18H1z" fill="#dd3f12" stroke="#dd3f12" strokeLinejoin="round" /></svg>
        </VoteCircle>
        <VoteText $c="#d9481c" $pr={14}>看涨</VoteText>
        <VoteText $c="#3fae68" $pl={12}>看跌</VoteText>
        <VoteCircle $pt={29}>
          <svg width="24" height="20" viewBox="0 0 24 20"><path d="M2 0h20v4l-4 6-6 8-6-8-4-6z" fill="#3fae68" stroke="#3fae68" strokeLinejoin="round" /></svg>
        </VoteCircle>
      </VoteBar>
    </Card>
  </Cards>
);

/* ---------- bottom navigation ---------- */

const NavBar = styled.div`
  height: 177px;
  flex: none;
  display: grid;
  grid-template-columns: 275px repeat(4, 201px);
  background: #f8faff;
  border-top: 2px solid #d2d4da;
`;

const IndexBox = styled.div`
  display: flex;
  flex-direction: column;
  align-items: center;
  padding-top: 9px;
`;

const UpCaret = styled.i`
  border: solid transparent;
  border-width: 0 11px 7px;
  border-bottom-color: #77777c;
`;

const IndexValue = styled(T)`
  margin-top: 12px;
`;

const IndexRow = styled.div`
  width: 100%;
  display: flex;
  justify-content: space-between;
  margin-top: 9px;
  padding: 0 1px 0 41px;
`;

const NavItem = styled.div`
  display: flex;
  flex-direction: column;
  align-items: center;
  padding-top: 8px;
  gap: 19px;
  color: #606060;
  font-size: 35px;
  -webkit-text-stroke: 0.3px currentColor;
`;

const NavIcon = ({ children }) => (
  <svg width="66" height="60" viewBox="0 0 66 60" fill="none" stroke="#606060" strokeWidth="2.800">{children}</svg>
);

const Nav = () => (
  <NavBar>
    <IndexBox>
      <UpCaret />
      <IndexValue $s={39} $c={GREEN} $ls={-0.8}>4016.41</IndexValue>
      <IndexRow>
        <T $s={35} $c="#606060">上证</T>
        <T $s={38} $c={GREEN} $ls={-0.4}>-0.32%</T>
      </IndexRow>
    </IndexBox>
    <NavItem>
      <NavIcon>
        <path d="M16 8A27.500 27.500 0 0 1 58 42l6-4M58 42l1-9M50 51A27.500 27.500 0 0 1 7 18l-6 4M7 18l0 9" />
        <path d="M23 17l10 12 10-12M33 29v18M23 30h20M23 39h20" strokeWidth="3" />
      </NavIcon>
      交易
    </NavItem>
    <NavItem>
      <NavIcon>
        <path d="M44 4H13q-6 0-6 6v40q0 6 6 6h39q6 0 6-6V19" />
        <path d="M49 13L30 33" strokeWidth="6.500" />
        <path d="M27 30.500l5 5-8 4z" fill="#606060" stroke="none" />
        <path d="M53.500 8.500l3-3" strokeWidth="6.500" strokeLinecap="round" />
      </NavIcon>
      发帖
    </NavItem>
    <NavItem>
      <NavIcon>
        <rect x="9.300" y="6" width="21.500" height="21" rx="3" />
        <rect x="9.300" y="33" width="21.500" height="21" rx="3" />
        <rect x="36.500" y="33" width="21.500" height="21" rx="3" />
        <rect x="38.500" y="7.500" width="17.500" height="17.500" rx="3" transform="rotate(45 47.250 16.250)" />
      </NavIcon>
      功能
    </NavItem>
    <NavItem>
      <NavIcon>
        <circle cx="33" cy="30" r="27" />
        <g fill="#606060" stroke="none"><circle cx="21" cy="30" r="3" /><circle cx="33" cy="30" r="3" /><circle cx="45" cy="30" r="3" /></g>
      </NavIcon>
      设自选
    </NavItem>
  </NavBar>
);

export default function App() {
  return (
    <>
      <GlobalStyle />
      <Page>
        <Status />
        <Header />
        <Quote />
        <Gdr />
        <Periods />
        <Averages />
        <Charts />
        <Banner />
        <SectionBar>
          {sections.map((name, i) => (
            <Tab key={name} $w={146.4} $on={i === 0}><TabText $on={i === 0} $bottom={6}>{name}</TabText></Tab>
          ))}
        </SectionBar>
        <CardRow />
        <Nav />
      </Page>
    </>
  );
}
